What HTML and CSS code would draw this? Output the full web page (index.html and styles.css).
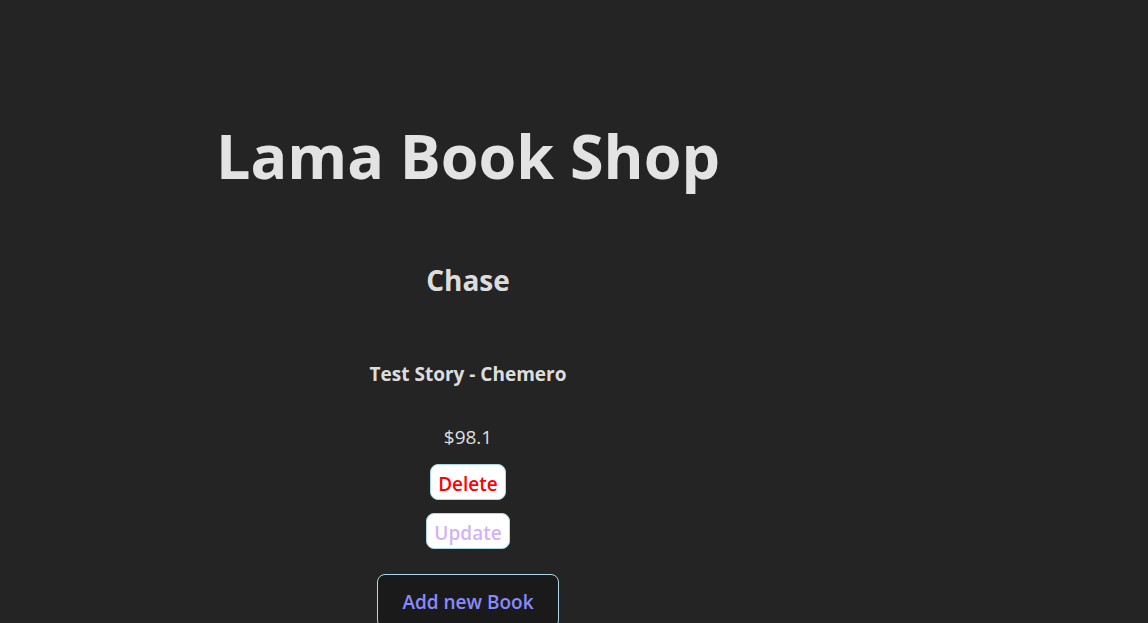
FILE: index.html
```html
<!DOCTYPE html>
<html lang="en">
<head>
<meta charset="utf-8">
<title>Lama Book Shop</title>
<link rel="stylesheet" href="styles.css">
</head>
<body>
<div class="app">
  <h1 class="title">Lama Book Shop</h1>
  <div class="books">
    <div class="book">
      <h2 class="book-cover">Chase</h2>
      <h3 class="book-title">Test Story - Chemero</h3>
      <p class="book-price">$98.1</p>
      <button class="btn btn-delete">Delete</button>
      <button class="btn btn-update">Update</button>
    </div>
  </div>
  <button class="btn-add">Add new Book</button>
</div>
</body>
</html>
```

FILE: styles.css
```css
html, body {
  margin: 0;
  padding: 0;
  background: #242424;
}

body {
  font-family: "Open Sans", "Noto Sans", sans-serif;
  color: rgba(255, 255, 255, 0.87);
  min-height: 623px;
}

.app {
  width: 936px;
  display: flex;
  flex-direction: column;
  align-items: center;
  text-align: center;
  padding-top: 121px;
}

.title {
  margin: 0;
  font-size: 61px;
  line-height: 70px;
  font-weight: 700;
  color: #e3e3e3;
}

.books {
  display: flex;
  flex-direction: column;
  align-items: center;
  margin-top: 69px;
}

.book {
  display: flex;
  flex-direction: column;
  align-items: center;
}

.book-cover {
  margin: 0;
  font-size: 28px;
  line-height: 40px;
  font-weight: 700;
}

.book-title {
  margin: 60px 0 0;
  font-size: 19px;
  line-height: 28px;
  font-weight: 700;
}

.book-price {
  margin: 35px 0 0;
  font-size: 19px;
  line-height: 28px;
}

.btn {
  font-family: inherit;
  font-size: 19px;
  line-height: 28px;
  font-weight: 600;
  background: #ffffff;
  border: 1px solid lightblue;
  border-radius: 8px;
  padding: 5px 7px 1px;
  cursor: pointer;
}

.btn-delete {
  margin-top: 13px;
  color: #ff0000;
}

.btn-update {
  margin-top: 13px;
  color: #d4b2f5;
}

.btn-add {
  margin-top: 25px;
  font-family: inherit;
  font-size: 19px;
  line-height: 28px;
  font-weight: 600;
  color: #8a8aff;
  background: #1a1a1a;
  border: 1px solid lightblue;
  border-radius: 8px;
  padding: 13px 24px 11px;
  cursor: pointer;
}
```
